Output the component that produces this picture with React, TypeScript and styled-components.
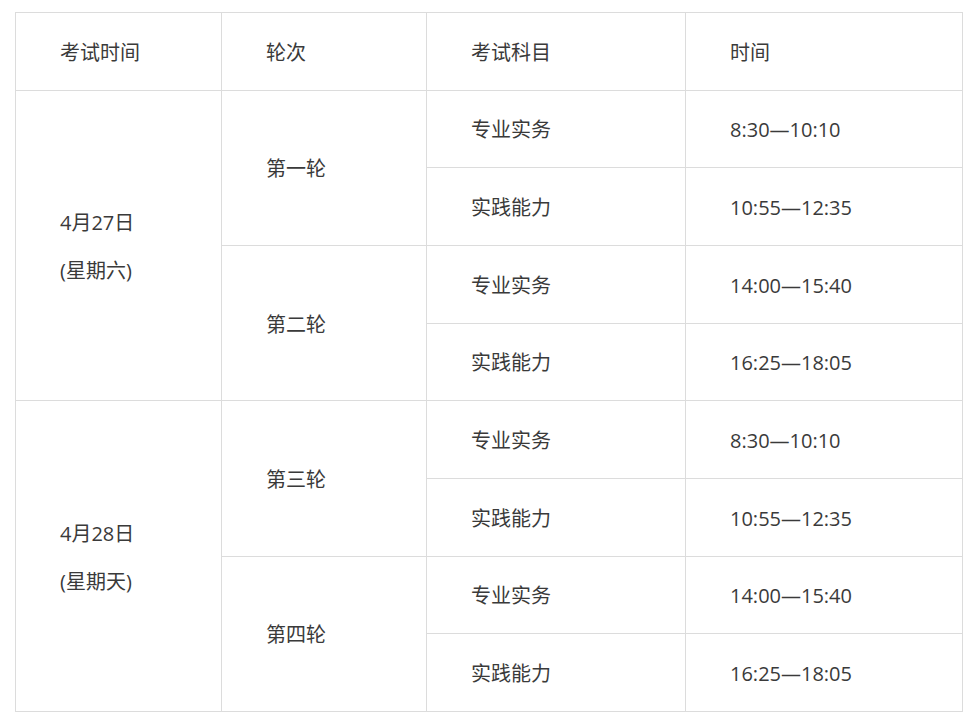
import React from "react";
import styled, { createGlobalStyle } from "styled-components";

const GlobalStyle = createGlobalStyle`
  body {
    margin: 0;
    background: #fff;
    font-family: "Open Sans", "Noto Sans CJK SC", sans-serif;
  }
`;

const Page = styled.div`
  padding: 12px 8px 0 15px;
`;

const Table = styled.table`
  border-collapse: collapse;
  table-layout: fixed;
  width: 947px;
  color: #3a3a3a;
  font-size: 20px;
`;

const Row = styled.tr`
  height: 77.67px;
`;

const Cell = styled.td`
  border: 1px solid #dcdcdc;
  padding: 2px 0 0 44px;
  vertical-align: middle;
  text-align: left;
  font-weight: 400;
  line-height: 27px;
`;

const HeadCell = styled(Cell).attrs({ as: "th" })``;

const Stack = styled.div`
  display: flex;
  flex-direction: column;
  gap: 21px;
`;

const rounds = [
  { day: "4月27日", week: "(星期六)", names: ["第一轮", "第二轮"], times: ["8:30—10:10", "10:55—12:35", "14:00—15:40", "16:25—18:05"] },
  { day: "4月28日", week: "(星期天)", names: ["第三轮", "第四轮"], times: ["8:30—10:10", "10:55—12:35", "14:00—15:40", "16:25—18:05"] },
];

const subjects = ["专业实务", "实践能力"];

export default function App() {
  return (
    <Page>
      <GlobalStyle />
      <Table>
        <colgroup>
          <col style={{ width: 206 }} />
          <col style={{ width: 205 }} />
          <col style={{ width: 259 }} />
          <col style={{ width: 277 }} />
        </colgroup>
        <thead>
          <Row>
            <HeadCell>考试时间</HeadCell>
            <HeadCell>轮次</HeadCell>
            <HeadCell>考试科目</HeadCell>
            <HeadCell>时间</HeadCell>
          </Row>
        </thead>
        <tbody>
          {rounds.map((d) =>
            [0, 1, 2, 3].map((i) => (
              <Row key={d.day + i}>
                {i === 0 && (
                  <Cell rowSpan={4}>
                    <Stack>
                      <span>{d.day}</span>
                      <span>{d.week}</span>
                    </Stack>
                  </Cell>
                )}
                {i % 2 === 0 && <Cell rowSpan={2}>{d.names[i / 2]}</Cell>}
                <Cell>{subjects[i % 2]}</Cell>
                <Cell>{d.times[i]}</Cell>
              </Row>
            ))
          )}
        </tbody>
      </Table>
    </Page>
  );
}
